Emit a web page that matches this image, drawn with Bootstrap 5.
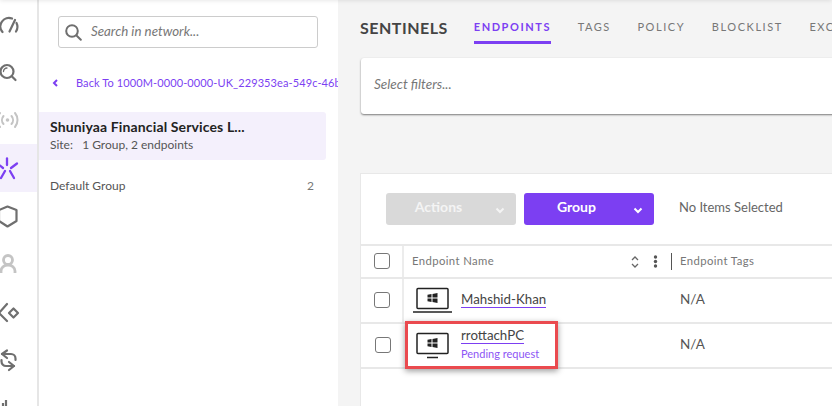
<!DOCTYPE html>
<html lang="en">
<head>
<meta charset="utf-8">
<title>Sentinels</title>
<link rel="stylesheet" href="https://cdn.jsdelivr.net/npm/bootstrap@5.3.0/dist/css/bootstrap.min.css">
<style>
html,body{height:406px;overflow:hidden;margin:0}
body{font-family:Lato,"Liberation Sans",sans-serif;color:#555;background:#fff}
.shell{height:406px;position:relative;overflow:hidden}
.shell::before{content:"";position:absolute;left:0;right:0;top:-4px;height:4px;box-shadow:0 0 5px rgba(0,0,0,.14);z-index:3}
.rail{width:39px;flex:none;border-right:2px solid #e6e6e6;background:#fff}
.rail-item{height:48px;display:flex;align-items:center;justify-content:flex-start}
.rail-item.on{background:#f4f0fc}
.rail-item svg{display:block;width:37px;height:48px}
.tree{width:299px;flex:none;background:#fff;overflow:hidden}
.searchbox{margin:16px 20px 0 19px;height:32px;border:1px solid #ccc;border-radius:3px;padding-left:6px;gap:9px}
.searchbox span{font-style:italic;font-size:13.300px;color:#777}
.backlink{margin-top:27px;height:16px;padding-left:13px;font-size:11px;color:#7c3ff2;white-space:nowrap;letter-spacing:.1px}
.backlink svg{margin-right:18px;flex:none}
.sitebox{margin-top:21px;width:287px;height:48px;background:#f4f0fc;border-radius:0 3px 3px 0;padding:6px 11px}
.sitebox b{display:block;font-size:14px;line-height:18px;color:#222;letter-spacing:.13px}
.sitebox span{display:block;font-size:12px;line-height:18px;color:#555}
.grouprow{margin-top:17px;padding:0 12px 0 11px;width:287px;font-size:12px;line-height:18px;color:#555}
.grouprow em{font-style:normal;font-size:12px;color:#777}
.mainpane{background:#f4f4f4;min-width:0;overflow:hidden;padding-left:22px}
.headline{height:44px;white-space:nowrap}
.headline h1{font-size:16px;font-weight:700;color:#444;letter-spacing:.5px;margin:0 26px 0 0;line-height:20px;padding-top:18px}
.tabline{padding-top:19px;gap:26.600px}
.tabline a{display:block;height:25px;font-size:11px;line-height:15px;letter-spacing:1.560px;color:#777;text-decoration:none}
.tabline a.on{color:#7c3ff2;font-weight:700;border-bottom:3px solid #7c3ff2}
.filterbar{margin:14px 0 0 1px;height:56px;background:#fff;border-radius:3px;box-shadow:0 1px 2px rgba(0,0,0,.5);padding:0 0 4px 13px;font-size:13.500px;font-style:italic;color:#777;width:600px}
.gridcard{margin-top:59px;background:#fff;border:1px solid #e8e8e8;border-right:0;border-bottom:0;height:233px;width:600px;position:relative}
.actionsrow{height:70px;padding:19px 0 0 25px;gap:8px}
.dropbtn{width:130px;height:32px;border-radius:3px;font-size:14px;font-weight:700;color:#fff;position:relative;text-align:center;line-height:28px;padding:0 25px 4px 0;border:0}
.dropbtn svg{position:absolute;right:11px;top:14px}
.dropbtn.off{background:#d9d9d9;color:#f4f4f4}
.dropbtn.live{background:#7c3ff2}
.nosel{font-size:13px;color:#666;margin-left:17px;line-height:28px}
.rowline{border-top:2px solid #e8e8e8;display:flex}
.cellcheck{width:43px;flex:none;display:flex;align-items:center;justify-content:center;padding:0 0 2px 1px}
.cellcheck.ruled{border-right:2px solid #ececec}
.fakebox{width:16px;height:16px;border:1px solid #777;border-radius:3px;background:#fff}
.headrow{height:33px;font-size:11.300px;color:#777;letter-spacing:.4px}
.namecol{width:268px;flex:none}
.headname{padding-left:8px}
.tagcol{font-size:11.300px;padding-left:8px}
.sortmark{margin-right:14px}
.dotsmark{margin-right:13px}
.divider{width:1px;height:17px;background:#555}
.bodyrow{height:45px}
.bodyrow.last{border-bottom:2px solid #e8e8e8;height:47px}
.rowname{padding:0 0 2px 9px;gap:9px}
.rowname u{display:inline-block;text-decoration:none;font-size:13.300px;line-height:15px;color:#444;border-bottom:1px solid #7c3ff2}
.pending{font-size:11px;line-height:14px;color:#8d55f5;margin-top:3px}
.na{font-size:13.500px;color:#555;padding:0 0 3px 8px}
.callout{position:absolute;left:44px;top:147px;width:153px;height:48px;border:3px solid #ea4a4f;box-shadow:0 2px 6px rgba(0,0,0,.4);pointer-events:none}
</style>
</head>
<body>
<div class="shell d-flex">
  <nav class="rail">
    <div class="rail-item"><svg viewBox="0 0 37 48" fill="none" stroke="#6f6f6f" stroke-width="2.200" stroke-linecap="round"><path d="M2.500 32A8.500 8.500 0 0 1 12 18.500"/><path d="M16 31.500A8.500 8.500 0 0 0 16.500 23"/><path d="M9.500 31.500L15 20"/></svg></div>
    <div class="rail-item"><svg viewBox="0 0 37 48" fill="none" stroke="#6f6f6f" stroke-width="2.200" stroke-linecap="round"><circle cx="7" cy="23.500" r="6.500"/><path d="M12 28.500l3.500 3.500"/><path d="M3.500 23.500a3.500 3.500 0 0 1 3.500-3.500" stroke-width="1.300"/></svg></div>
    <div class="rail-item"><svg viewBox="0 0 37 48" fill="none" stroke="#c4c4c4" stroke-width="2" stroke-linecap="round"><circle cx="7.500" cy="24" r="1.800" fill="#c4c4c4" stroke="none"/><path d="M3.500 20a6 6 0 0 0 0 8"/><path d="M11.500 20a6 6 0 0 1 0 8"/><path d="M0 17a11 11 0 0 0 0 14"/><path d="M15 17a11 11 0 0 1 0 14"/></svg></div>
    <div class="rail-item on"><svg viewBox="0 0 37 48" fill="none" stroke="#7c3ff2" stroke-width="2.300" stroke-linecap="round"><path d="M7 14.500v6.500"/><path d="M11 24l6-4.500"/><path d="M10 27l4 7"/><path d="M5 27L1 34"/><path d="M3 24l-5-4"/></svg></div>
    <div class="rail-item"><svg viewBox="0 0 37 48" fill="none" stroke="#6f6f6f" stroke-width="2.200" stroke-linejoin="round"><path d="M7.500 14.500L16.500 18V29L7.500 34.500-1 29V18Z"/></svg></div>
    <div class="rail-item"><svg viewBox="0 0 37 48" fill="none" stroke="#c4c4c4" stroke-width="2.800"><circle cx="8" cy="20" r="4.500"/><path d="M1 33v-2a7 6 0 0 1 14 0v2"/></svg></div>
    <div class="rail-item"><svg viewBox="0 0 37 48" fill="none" stroke="#6f6f6f" stroke-width="2.200" stroke-linecap="round" stroke-linejoin="round"><path d="M7 16L-1 25 7 33"/><path d="M13.500 20.500L18 25 13.500 29.500 9 25Z"/></svg></div>
    <div class="rail-item"><svg viewBox="0 0 37 48" fill="none" stroke="#6f6f6f" stroke-width="2.200" stroke-linecap="round" stroke-linejoin="round"><path d="M7 14.500L2 18l5 4"/><path d="M2 18h9a4.500 4.500 0 0 1 4.500 4.500V24"/><path d="M9 26l5 4-5 4"/><path d="M14 30H6a4.500 4.500 0 0 1-4.500-4.500V24"/></svg></div>
    <div class="rail-item"><svg viewBox="0 0 37 48" fill="none" stroke="#6f6f6f" stroke-width="2.200"><path d="M3 19v8M6 16v10"/></svg></div>
  </nav>

  <aside class="tree">
    <div class="searchbox d-flex align-items-center">
      <svg width="17" height="17" viewBox="0 0 17 17" fill="none" stroke="#6f6f6f" stroke-width="2" stroke-linecap="round"><circle cx="7" cy="7" r="5.800"/><path d="M11.500 11.500l4.300 4.300"/></svg>
      <span>Search in network...</span>
    </div>
    <div class="backlink d-flex align-items-center">
      <svg width="6" height="8" viewBox="0 0 6 8" fill="none" stroke="#7c3ff2" stroke-width="2"><path d="M5 1L2 4l3 3"/></svg>
      <span>Back To 1000M-0000-0000-UK_229353ea-549c-46b</span>
    </div>
    <div class="sitebox">
      <b>Shuniyaa Financial Services L...</b>
      <span>Site:&nbsp;&nbsp;&nbsp;1 Group, 2 endpoints</span>
    </div>
    <div class="grouprow d-flex justify-content-between">
      <span>Default Group</span><em>2</em>
    </div>
  </aside>

  <main class="mainpane flex-grow-1">
    <div class="headline d-flex">
      <h1>SENTINELS</h1>
      <div class="tabline d-flex">
        <a class="on" href="#">ENDPOINTS</a>
        <a href="#">TAGS</a>
        <a href="#">POLICY</a>
        <a href="#">BLOCKLIST</a>
        <a href="#">EXCLUSIONS</a>
      </div>
    </div>
    <div class="filterbar d-flex align-items-center">Select filters...</div>
    <section class="gridcard">
      <div class="actionsrow d-flex align-items-start">
        <button type="button" class="dropbtn off">Actions<svg width="10" height="7" viewBox="0 0 10 7" fill="none" stroke="#f4f4f4" stroke-width="2"><path d="M1.500 1.500L5 5l3.500-3.500"/></svg></button>
        <button type="button" class="dropbtn live">Group<svg width="10" height="7" viewBox="0 0 10 7" fill="none" stroke="#fff" stroke-width="2"><path d="M1.500 1.500L5 5l3.500-3.500"/></svg></button>
        <span class="nosel">No Items Selected</span>
      </div>
      <div class="rowline headrow">
        <div class="cellcheck ruled"><span class="fakebox"></span></div>
        <div class="namecol headname d-flex align-items-center justify-content-between">
          <span>Endpoint Name</span>
          <span class="d-flex align-items-center">
            <svg class="sortmark" width="8" height="12" viewBox="0 0 8 12" fill="none" stroke="#666" stroke-width="1.300"><path d="M1 4l3-3 3 3M1 8l3 3 3-3"/></svg>
            <svg class="dotsmark" width="5" height="13" viewBox="0 0 5 13" fill="#555"><circle cx="2.500" cy="2" r="1.700"/><circle cx="2.500" cy="6.500" r="1.700"/><circle cx="2.500" cy="11" r="1.700"/></svg>
            <span class="divider"></span>
          </span>
        </div>
        <div class="tagcol d-flex align-items-center">Endpoint Tags</div>
      </div>
      <div class="rowline bodyrow">
        <div class="cellcheck ruled"><span class="fakebox"></span></div>
        <div class="namecol rowname d-flex align-items-center">
          <svg width="39" height="26" viewBox="0 0 39 26" fill="none"><rect x="4" y="1.500" width="31" height="20" stroke="#222" stroke-width="1.500" rx="1"/><path d="M0 25h39" stroke="#222" stroke-width="1.500"/><path d="M14.500 7.700l4-.7v3.500h-4ZM19.500 6.900l5-.9v4.500h-5ZM14.500 11.500h4V15l-4-.7ZM19.500 11.500h5V16l-5-.9Z" fill="#222"/></svg>
          <u>Mahshid-Khan</u>
        </div>
        <div class="na d-flex align-items-center">N/A</div>
      </div>
      <div class="rowline bodyrow last">
        <div class="cellcheck"><span class="fakebox"></span></div>
        <div class="namecol rowname d-flex align-items-center">
          <svg width="39" height="28" viewBox="0 0 39 28" fill="none"><rect x="4" y="2.500" width="31" height="20" stroke="#222" stroke-width="1.500" rx="1"/><path d="M14 26.500h11" stroke="#222" stroke-width="1.500"/><path d="M14.500 8.700l4-.7v3.500h-4ZM19.500 7.900l5-.9v4.500h-5ZM14.500 12.500h4V16l-4-.7ZM19.500 12.500h5V17l-5-.9Z" fill="#222"/></svg>
          <div class="d-flex flex-column align-items-start">
            <u>rrottachPC</u>
            <span class="pending">Pending request</span>
          </div>
        </div>
        <div class="na d-flex align-items-center">N/A</div>
      </div>
      <div class="callout"></div>
    </section>
  </main>
</div>
<script src="https://cdn.jsdelivr.net/npm/bootstrap@5.3.0/dist/js/bootstrap.bundle.min.js"></script>
</body>
</html>
